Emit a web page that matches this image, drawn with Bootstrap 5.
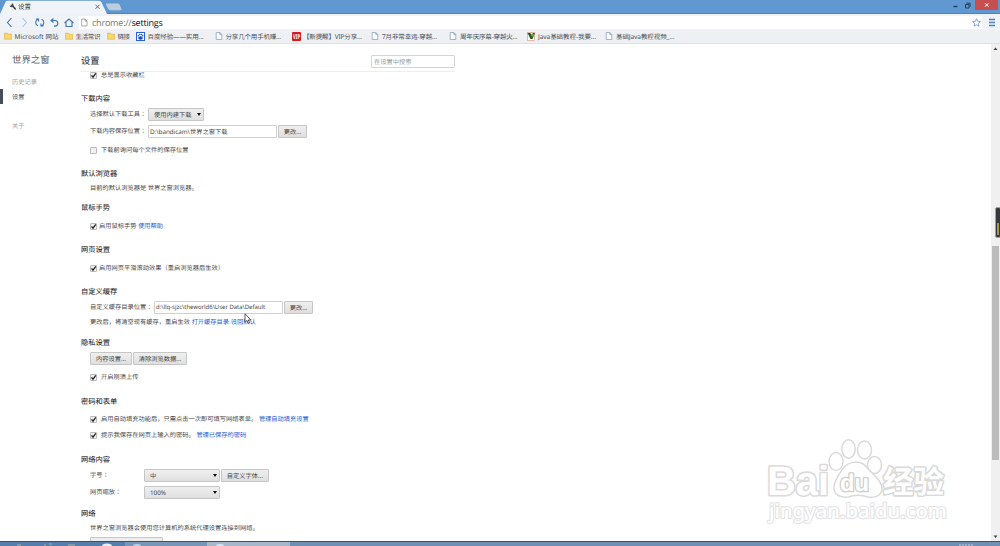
<!DOCTYPE html>
<html lang="en">
<head>
<meta charset="utf-8">
<title>设置</title>
<link href="https://cdn.jsdelivr.net/npm/bootstrap@5.3.0/dist/css/bootstrap.min.css" rel="stylesheet">
<style>
body{width:1000px;height:546px;overflow:hidden;font:6.25px/14px "Noto Sans","Noto Sans CJK SC",sans-serif;color:#484848;text-rendering:geometricPrecision;white-space:nowrap;background:#fff}
svg{display:block;flex:none}
.zt{font-family:"Noto Sans CJK TC",sans-serif;font-style:normal}
.titlebar{height:14px;background:#6098d1;border-bottom:1px solid #4c83be}
.tabs-art{width:125px;height:14px}
.tab-label{left:18px;top:0;line-height:13px;font-size:6.5px;color:#333}
.win-close{width:23px;height:10px;background:#c84f50;margin-right:2px}
.toolbar{height:16px;background:#eff2f6}
.addr{height:13px;background:#fff;width:903px;font:9.1px/13px "Open Sans",sans-serif;letter-spacing:-.25px;color:#777;margin-left:4px;padding-left:2px}
.addr b{font-weight:400;color:#111}
.addr .doc{margin-right:3px}
.bookmarks{height:14px;background:#eef0f4;border-bottom:1px solid #dce3e8;font-size:6.5px;line-height:14px;color:#4b4e55}
.view{height:497px}
.side{width:81px;padding-top:7px}
.side .brand{font-size:9.4px;color:#5b6068;line-height:18px;padding-left:12px}
.side a{display:block;padding-left:12px;height:15px;line-height:15px;color:#a2a2a2;text-decoration:none}
.side a.on{color:#464e5a;border-left:3px solid #464e5a;padding-left:9px}
.head{height:28px;width:374px;border-bottom:1px solid #eee}
.head h1{font-size:9.2px;line-height:14px;margin:0;color:#444b55;padding-top:6px}
.srch{width:84px;height:13px;border:1px solid #d5d5d5;border-radius:1px;color:#999;line-height:11px;padding-left:2px;margin-top:8px}
.pane{height:469px}
.r{height:14px;padding-left:9px;display:flex;align-items:center;flex:none}
h2.r{font-size:7.25px;line-height:14px;margin-bottom:0;padding-left:0;color:#222;font-weight:400;-webkit-text-stroke:.06px #222}
.cb{width:7px;height:7px;border:1px solid #bbb;background:#f0f0f0;border-radius:1px;flex:none;margin-right:4px}
.cb.near{margin-right:2px}
.cb svg{margin:-1px 0 0 -1px}
.pb{height:13px;line-height:11px;border:1px solid #c6c6c6;border-radius:1px;background:linear-gradient(#efefef,#dfdfdf);color:#444;text-align:center;flex:none;position:relative}
.pb.sel{text-align:left;padding-left:5px}
.pb.sel::after{content:"";position:absolute;right:2.5px;top:4px;border:2.5px solid transparent;border-top:3.5px solid #111;border-bottom:0}
.inp{height:13px;line-height:11px;border:1px solid #d0d0d0;border-radius:1px;width:129px;padding-left:1px;margin-right:1px;flex:none}
.inp.dir{font-size:5.95px}
.pane a{color:#2458d0;text-decoration:none}
.w28{width:29px}.w41{width:42px}.w54{width:54px}.w56{width:56px}.w76{width:76px}.w48{width:48px}.w73{width:73px}
.gap{margin-right:1px}
.l58{width:58px}.l64{width:64px}.lf{width:54px}
.t-4{margin-top:-4px}.t0{margin-top:0}.t1{margin-top:1px}.t2{margin-top:2px}.t3{margin-top:3px}.t4{margin-top:4px}.t5{margin-top:5px}.t6{margin-top:6px}.t7{margin-top:7px}.t8{margin-top:8px}.t9{margin-top:9px}.t10{margin-top:10px}.t11{margin-top:11px}.t14{margin-top:14px}
.sbar{width:9px;background:#f0f0f0}
.thumb{left:1px;top:202px;width:7px;height:214px;background:#bcbcbc}
.gadget{left:995px;top:207px;width:6px;height:31px;background:#35383c;border:1px solid #a9a08e;border-radius:2px}
.gadget i{position:absolute;left:1px;top:15px;width:2px;height:12px;background:#a99436}
.task{height:5px;background:#557ead;border-top:1px solid #3b5168}
.mark-art{left:760px;top:432px}
.pointer{left:244px;top:313px}
</style>
</head>
<body>
<svg width="0" height="0" class="position-absolute">
<symbol id="tick" viewBox="0 0 7 7"><path d="M1.5 3.3L3 5.2 5.8 1.4" fill="none" stroke="#222" stroke-width="1.3"/></symbol>
<symbol id="folder" viewBox="0 0 8 8"><path d="M.3 1.2h3l.8 1h3.6v5H.3z" fill="#f8d86b" stroke="#dfac3c" stroke-width=".6"/></symbol>
<symbol id="page" viewBox="0 0 8 8"><path d="M1.2.5h3.6l2 2v5H1.2zM4.8.5v2h2" fill="#fbfcfe" stroke="#7f98b8" stroke-width=".7"/></symbol>
</svg>
<header class="position-relative">
 <div class="titlebar d-flex justify-content-between">
  <div class="tabs-art position-relative">
   <svg width="125" height="14"><path d="M0 14L5.500 2Q6 .8 8 .8h91q2 0 2.600 1.600L107 14z" fill="#f0f3f7"/><path d="M106.500 3.500h11q1.500 0 2 1l2 4.500q.4 1.300-1 1.300h-10q-1.500 0-2-1l-2.500-4.500q-.3-1.300.5-1.300z" fill="#bccde0"/><path d="M12 5.300l3.200 3.500" stroke="#444" stroke-width="1.700" stroke-linecap="round"/><path d="M11.600 3.200a2 2 0 1 1-2 2.200l1.600.3.700-.9z" fill="#444"/><path d="M95.500 4.800l4 4m0-4l-4 4" stroke="#666" stroke-width="1"/></svg>
   <span class="tab-label position-absolute">设置</span>
  </div>
  <div class="d-flex">
   <svg width="36" height="13"><path d="M14.500 6.500h4" stroke="#1c3c5c" stroke-width="1.400"/><path d="M26.500 4.500h3.500v3.500h-3.500zM27.500 3.200h3.600v3.600" fill="none" stroke="#23415f" stroke-width="1"/></svg>
   <div class="win-close"><svg width="23" height="10"><path d="M10 3.200l3.500 3.500m0-3.500l-3.500 3.500" stroke="#fff" stroke-width="1"/></svg></div>
  </div>
 </div>
 <div class="toolbar d-flex align-items-center">
  <svg width="75" height="15" fill="none" stroke="#3d76b4" stroke-width="1.100"><path d="M11.500 3L7.500 7.500l4 4.500"/><path d="M22.500 3l4 4.500-4 4.500" stroke="#a9c4df"/><path d="M38 4.200a3.500 3.500 0 0 0 0 6.600M41.500 10.800a3.500 3.500 0 0 0 0-6.600M36 4.100h2.500V6.500M43.500 10.900H41V8.500"/><path d="M53.500 3.500L51 5.500l2.500 2M51 5.500h4a2.800 2.800 0 0 1 0 5.600h-1"/><path d="M64.500 8l4.500-4 4.500 4M66 7.500v4h6v-4"/></svg>
  <div class="addr d-flex align-items-center"><svg width="8" height="9" viewBox="0 0 8 8" class="doc"><path d="M.7.500h3.300l2 2v5H.7zM4 .5v2h2" fill="none" stroke="#888" stroke-width=".7"/></svg><span>chrome://<b>settings</b></span>
   <svg class="ms-auto gap" width="9" height="9" viewBox="0 0 8 8"><path d="M4 .6l1 2.300 2.500.2-1.900 1.700.6 2.500L4 6l-2.200 1.300.6-2.500L.5 3.100 3 2.900z" fill="none" stroke="#7d9cc8" stroke-width=".8"/></svg></div>
  <svg width="18" height="15"><path d="M7 4.500h6M7 7.500h6M7 10.500h6" stroke="#5580b3" stroke-width="1.500"/></svg>
 </div>
 <div class="bookmarks">
  <svg width="700" height="13" fill="#4b4e55">
   <use href="#folder" x="4" y="2" width="8" height="8"/><text x="14.500" y="8.500" textLength="44">Microsoft 网站</text>
   <use href="#folder" x="65" y="2" width="8" height="8"/><text x="75.500" y="8.500" textLength="25">生活常识</text>
   <use href="#folder" x="107" y="2" width="8" height="8"/><text x="117.500" y="8.500" textLength="12.500">链接</text>
   <rect x="136.500" y="2.500" width="8" height="8" fill="#fff" stroke="#2860dc"/><ellipse cx="140.500" cy="8" rx="2.300" ry="1.700" fill="#1849d4"/><circle cx="138.300" cy="5.800" r=".8" fill="#1849d4"/><circle cx="139.800" cy="4.500" r=".8" fill="#1849d4"/><circle cx="141.500" cy="4.500" r=".8" fill="#1849d4"/><circle cx="142.800" cy="5.800" r=".8" fill="#1849d4"/>
   <text x="147.500" y="8.500" textLength="56">百度经验——实用...</text>
   <use href="#page" x="215" y="2" width="8" height="8"/><text x="225.500" y="8.500" textLength="55.500">分享几个用手机赚...</text>
   <rect x="292" y="2" width="9" height="9" rx="1" fill="#d81920"/><text x="293" y="8.900" font-weight="700" fill="#fff" textLength="7" lengthAdjust="spacingAndGlyphs">VIP</text>
   <text x="303" y="8.500" textLength="59">【新提醒】VIP分享...</text>
   <use href="#page" x="371" y="2" width="8" height="8"/><text x="382" y="8.500" textLength="55">7月非常幸运-穿越...</text>
   <use href="#page" x="449" y="2" width="8" height="8"/><text x="460" y="8.500" textLength="57.500">周年庆序幕-穿越火...</text>
   <rect x="527.500" y="2.500" width="7" height="8" fill="#fff" stroke="#df9b8e" stroke-width=".7"/><path d="M527.500 3h3l1 3 1.500-3h2l-2.500 6h-2z" fill="#2b5b20"/><circle cx="532.500" cy="5" r="1.600" fill="#66ad25"/>
   <text x="538" y="8.500" textLength="58">Java基础教程-我要...</text>
   <use href="#page" x="605" y="2" width="8" height="8"/><text x="616" y="8.500" textLength="58.500">基础Java教程视频_...</text>
  </svg>
 </div>
</header>
<main class="view d-flex">
 <nav class="side">
  <div class="brand">世界之窗</div>
  <a href="#" class="t5">历史记录</a><a href="#" class="on t0">设置</a><a href="#" class="t14">关于</a>
 </nav>
 <div class="flex-grow-1">
  <div class="head d-flex justify-content-between align-items-center"><h1>设置</h1><div class="srch">在设置中搜索</div></div>
  <div class="pane d-flex flex-column overflow-hidden">
   <div class="r t-4"><span class="cb"><svg width="7" height="7"><use href="#tick"/></svg></span>总是显示收藏栏</div>
   <h2 class="r t10">下载内容</h2>
   <div class="r t1"><span class="l58">选择默认下载工具<i class="zt">：</i></span><span class="pb sel w56">使用内建下载</span></div>
   <div class="r t3"><span class="l58">下载内容保存位置<i class="zt">：</i></span><span class="inp">D:\bandicam\世界之窗下载</span><span class="pb w28">更改...</span></div>
   <div class="r t5"><span class="cb"></span>下载前询问每个文件的保存位置</div>
   <h2 class="r t10">默认浏览器</h2>
   <div class="r t0">目前的默认浏览器是 世界之窗浏览器。</div>
   <h2 class="r t6">鼠标手势</h2>
   <div class="r t4"><span class="cb near"><svg width="7" height="7"><use href="#tick"/></svg></span>启用鼠标手势&nbsp;<a href="#">使用帮助</a></div>
   <h2 class="r t10">网页设置</h2>
   <div class="r t4"><span class="cb near"><svg width="7" height="7"><use href="#tick"/></svg></span>启用网页平滑滚动效果（重启浏览器后生效）</div>
   <h2 class="r t10">自定义缓存</h2>
   <div class="r t1"><span class="l64">自定义缓存目录位置<i class="zt">：</i></span><span class="inp dir">d:\llq-sjzc\theworld6\User Data\Default</span><span class="pb w28">更改...</span></div>
   <div class="r t1">更改后，将清空现有缓存，重启生效&nbsp;<a href="#">打开缓存目录</a>&nbsp;<a href="#">设回默认</a></div>
   <h2 class="r t7">隐私设置</h2>
   <div class="r t1"><span class="pb w41 gap">内容设置...</span><span class="pb w54">清除浏览数据...</span></div>
   <div class="r t5"><span class="cb"><svg width="7" height="7"><use href="#tick"/></svg></span>开启崩溃上传</div>
   <h2 class="r t11">密码和表单</h2>
   <div class="r t3"><span class="cb"><svg width="7" height="7"><use href="#tick"/></svg></span>启用自动填充功能后，只需点击一次即可填写网络表单。&nbsp;<a href="#">管理自动填充设置</a></div>
   <div class="r t2"><span class="cb"><svg width="7" height="7"><use href="#tick"/></svg></span>提示我保存在网页上输入的密码。&nbsp;<a href="#">管理已保存的密码</a></div>
   <h2 class="r t11">网络内容</h2>
   <div class="r t1"><span class="lf">字号<i class="zt">：</i></span><span class="pb sel w76 gap">中</span><span class="pb w48">自定义字体...</span></div>
   <div class="r t3"><span class="lf">网页缩放<i class="zt">：</i></span><span class="pb sel w76">100%</span></div>
   <h2 class="r t8">网络</h2>
   <div class="r t0">世界之窗浏览器会使用您计算机的系统代理设置连接到网络。</div>
   <div class="r t1"><span class="pb w73">更改代理服务器设置...</span></div>
  </div>
 </div>
 <div class="sbar position-relative"><svg width="9" height="497"><path d="M2.500 6h4L4.500 3.500zM2.500 491.500h4l-2 2.500z" fill="#444"/></svg><div class="thumb position-absolute"></div></div>
</main>
<footer class="task"><svg width="1000" height="4"><path d="M125 0h82v4h-82z" fill="#7896b8"/><path d="M207 0h83v4h-83z" fill="#a5b7cb"/><path d="M290 0h710v4H290z" fill="#6f8fb4"/><ellipse cx="107" cy="4" rx="5" ry="2.500" fill="#e9eef2"/><ellipse cx="137" cy="4" rx="4" ry="2" fill="#b8d2ee"/><ellipse cx="220" cy="4" rx="4" ry="2" fill="#d3e4f7"/><path d="M68 3h7M17 3h4M44 3h2M49 2h3" stroke="#a9b3a9"/><path d="M959 3h14" stroke="#c3cfdd" stroke-dasharray="2 1"/></svg></footer>
<div class="gadget position-absolute"><i></i></div>
<svg class="mark-art position-absolute" width="195" height="100" fill="#fff" stroke-linejoin="round">
 <g font-weight="700" stroke="#dadada" stroke-width="3.200" paint-order="stroke">
 <text x="7" y="62.500" font-family="Liberation Sans,sans-serif" font-size="41" textLength="62" lengthAdjust="spacingAndGlyphs">Bai</text>
 <text x="123" y="60.500" font-size="31" textLength="61" lengthAdjust="spacingAndGlyphs" font-family="Noto Sans CJK SC,sans-serif">经验</text>
 <text x="9" y="86" font-family="Noto Sans,sans-serif" font-size="20" font-weight="500" textLength="178" lengthAdjust="spacingAndGlyphs" stroke="#e4e4e4" stroke-width="2.200">jingyan.baidu.com</text></g>
 <g stroke="#dadada" stroke-width="1.500"><ellipse cx="76" cy="29.500" rx="7" ry="9"/><ellipse cx="88.500" cy="17" rx="6.700" ry="9.200"/><ellipse cx="104.500" cy="18" rx="7" ry="9"/><ellipse cx="114.500" cy="33" rx="7" ry="8.500"/>
 <path d="M85 37c7-9 19-9 25-1 3 5 14 11 14.500 20 0 8-7 10-14 9-6-2-14-2-20 0-7 1-14-2-14-9 0-8 5-13 8.500-19z" transform="translate(-2.500 0)"/>
 <text x="80" y="59" font-family="Liberation Sans,sans-serif" font-weight="700" font-size="24" textLength="29" lengthAdjust="spacingAndGlyphs" stroke="#cecece" stroke-width="2.600" paint-order="stroke">du</text></g>
</svg>
<svg class="position-absolute pointer" width="8" height="12"><path d="M1 .8v8.500l2-1.900 1.300 3 1.300-.6-1.300-2.800h2.600z" fill="#fff" stroke="#333" stroke-width=".8"/></svg>
<script src="https://cdn.jsdelivr.net/npm/bootstrap@5.3.0/dist/js/bootstrap.bundle.min.js"></script>
</body>
</html>
